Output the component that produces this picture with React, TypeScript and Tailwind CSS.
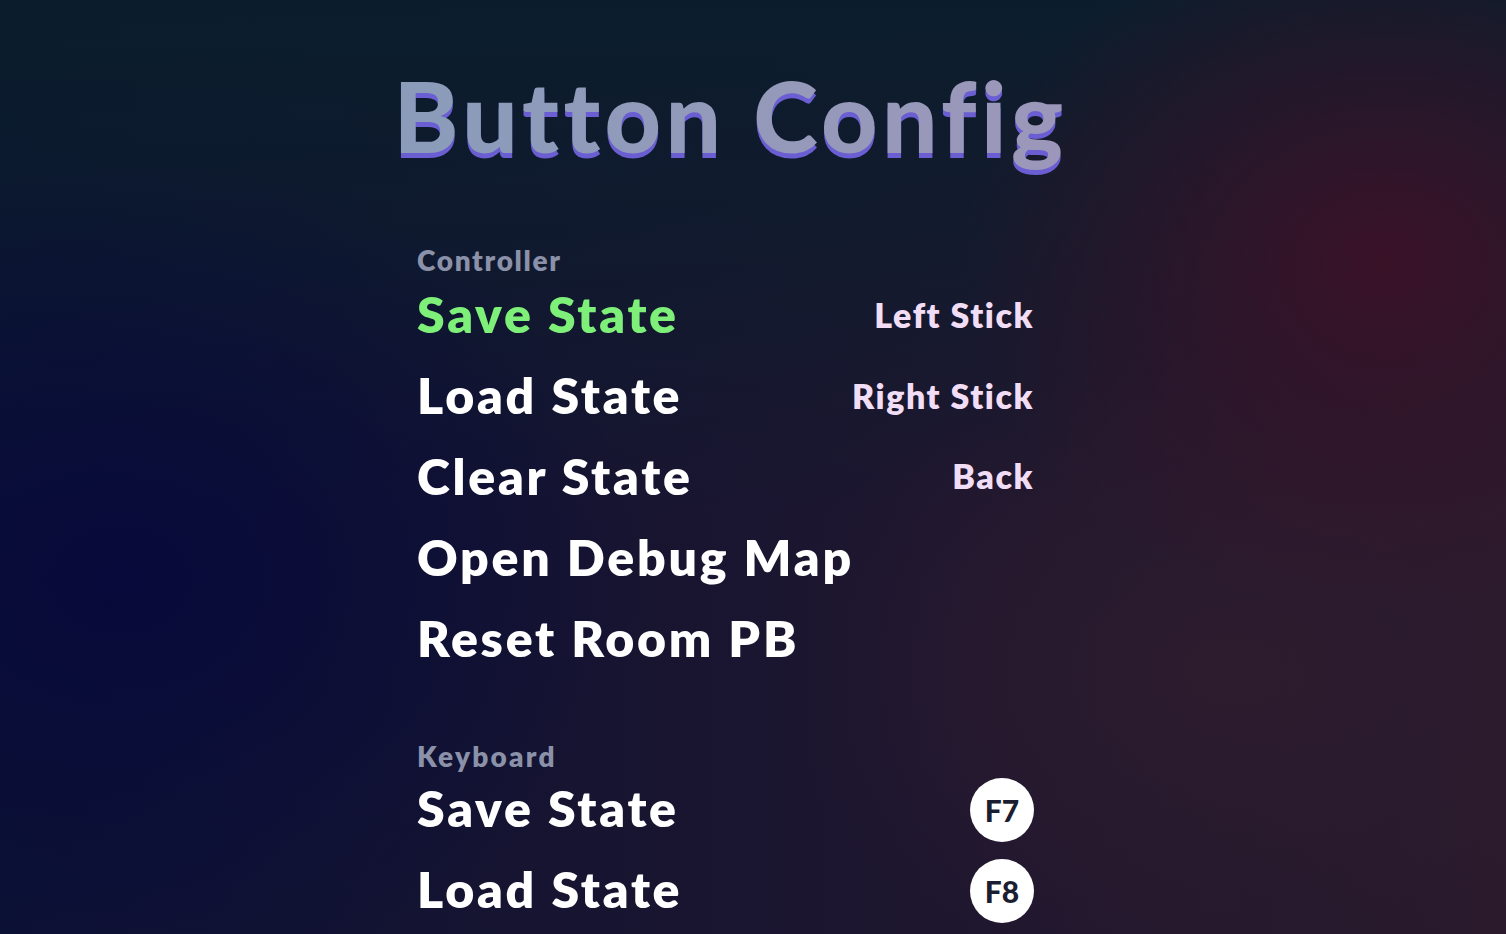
import React from "react";

const font = { fontFamily: '"Lato", "Open Sans", sans-serif' };

type Row = { label: string; value?: string; key?: string; active?: boolean };

const controller: Row[] = [
  { label: "Save State", value: "Left Stick", active: true },
  { label: "Load State", value: "Right Stick" },
  { label: "Clear State", value: "Back" },
  { label: "Open Debug Map" },
  { label: "Reset Room PB" },
];

const keyboard: Row[] = [
  { label: "Save State", key: "F7" },
  { label: "Load State", key: "F8" },
];

function RowItem({ row }: { row: Row }) {
  return (
    <div className="flex h-[80.8px] items-center justify-between">
      <span
        className={
          "-mt-[3px] text-[50px] font-extrabold leading-none tracking-[0.055em] " +
          (row.active ? "text-[#7ef07a]" : "text-white")
        }
      >
        {row.label}
      </span>
      {row.value && (
        <span className="-mt-[2px] text-[34px] font-extrabold leading-none tracking-[0.045em] text-[#f1ddf5]">
          {row.value}
        </span>
      )}
      {row.key && (
        <span className="flex h-[64px] w-[64px] items-center justify-center rounded-full bg-white text-[30px] font-black leading-none text-[#1b1d30]">
          {row.key}
        </span>
      )}
    </div>
  );
}

export default function App() {
  return (
    <div
      style={font}
      className="relative h-[934px] w-full overflow-hidden bg-[#161632] bg-[radial-gradient(ellipse_28%_38%_at_92%_28%,#3a1228_0%,rgba(58,18,40,0)_100%),radial-gradient(ellipse_30%_35%_at_82%_72%,#2d1c2e_0%,rgba(45,28,46,0)_100%),radial-gradient(ellipse_35%_45%_at_8%_62%,#070a3a_0%,rgba(7,10,58,0)_100%),linear-gradient(180deg,#0b1d2c_0%,rgba(11,29,44,0.6)_25%,rgba(11,29,44,0)_55%),linear-gradient(90deg,#0c1234_0%,#1a1530_50%,#2a1a2c_100%)]"
    >
      <div className="ml-[417px] w-[617px]">
        <div className="flex h-[240px] justify-center pt-[66px]">
          <div className="translate-x-[5px] whitespace-nowrap bg-gradient-to-r from-[#8a9cba] to-[#9c97ba] bg-clip-text text-[98px] font-black leading-none tracking-[0.045em] text-transparent [filter:drop-shadow(0_5px_0_#6a5ed2)]">
            Button Config
          </div>
        </div>

        <div className="flex h-[35.5px] items-end pb-[2px] text-[28px] font-extrabold leading-none tracking-[0.06em] text-[#8a91a9]">
          Controller
        </div>
        {controller.map((r) => (
          <RowItem key={r.label} row={r} />
        ))}

        <div className="mt-[63px] flex h-[27px] items-center text-[28px] font-extrabold leading-none tracking-[0.08em] text-[#8a91a9]">
          Keyboard
        </div>
        {keyboard.map((r) => (
          <RowItem key={r.label} row={r} />
        ))}
      </div>
    </div>
  );
}
